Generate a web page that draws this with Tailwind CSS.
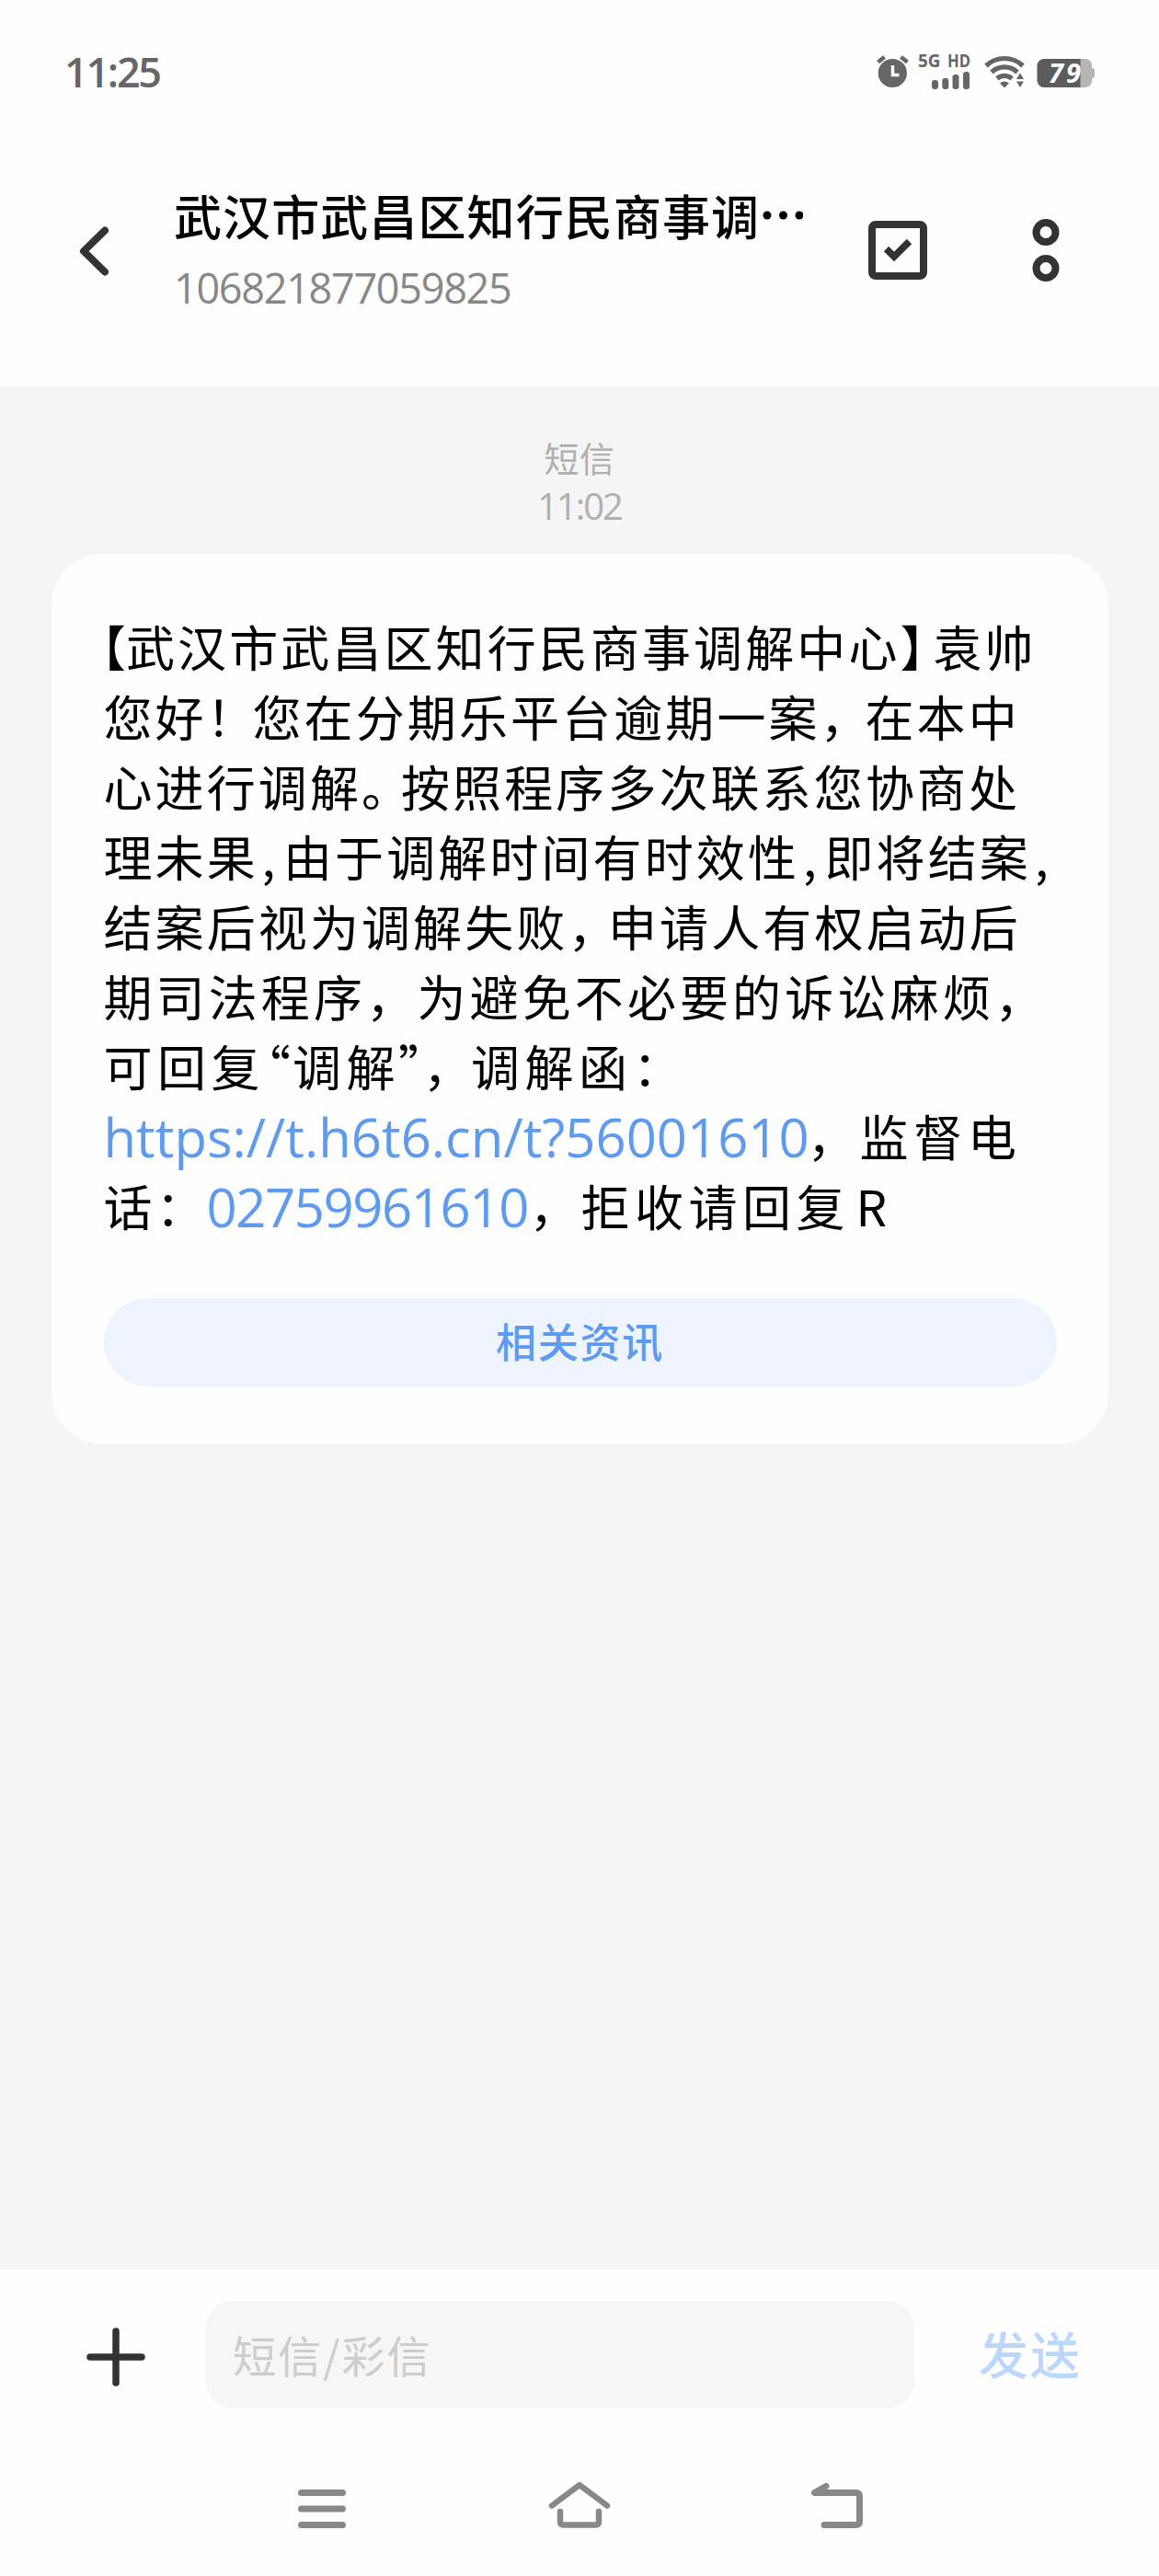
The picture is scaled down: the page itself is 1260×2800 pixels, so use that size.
<!DOCTYPE html>
<html lang="zh-CN">
<head>
<meta charset="utf-8">
<title>短信</title>
<script src="https://cdn.jsdelivr.net/npm/@tailwindcss/browser@4"></script>
</head>
<body class="w-[1260px] h-[2800px] bg-[#fefefe] flex flex-col overflow-hidden font-['Noto_Sans_CJK_SC',sans-serif] text-black">

<!-- status bar -->
<div class="h-[156px] shrink-0 flex items-center justify-between pl-[70px] pr-[68px]">
  <div class="font-['Open_Sans','Noto_Sans',sans-serif] font-semibold text-[45px] leading-[60px] tracking-[-2.300px] text-[#666]">11:25</div>
  <svg class="w-[240px] h-[60px]" viewBox="952 48 240 60" fill="#666">
    <circle cx="970.3" cy="79.5" r="15.6"/>
    <path d="M954.5 67.5l7-5.5M986.500 67.500l-7-5.500" stroke="#666" stroke-width="4.500"/>
    <path d="M970.500 71v10.500h7" fill="none" stroke="#fff" stroke-width="3.500"/>
    <text x="998" y="72.500" font-family="Open Sans" font-weight="700" font-size="19.500" textLength="24.500" lengthAdjust="spacingAndGlyphs">5G</text>
    <text x="1030" y="73" font-family="Open Sans" font-weight="700" font-size="20" textLength="25" lengthAdjust="spacingAndGlyphs">HD</text>
    <rect x="1013" y="87" width="7" height="10" rx="3"/>
    <rect x="1024.300" y="85" width="7" height="12" rx="3"/>
    <rect x="1035.500" y="81" width="7" height="16" rx="3"/>
    <rect x="1047" y="78" width="7" height="19" rx="3"/>
    <g fill="none" stroke="#666" stroke-width="5.200">
      <path d="M1072 71.500a29 29 0 0 1 40 0"/>
      <path d="M1078 78.500a20.500 20.500 0 0 1 28 0"/>
      <path d="M1084 85.500a12 12 0 0 1 16 0"/>
    </g>
    <path d="M1087 90.500q5-4 10 0l-5 5zM1105 86l4-6.500 4 6.500zM1105 88.500h8l-4 6.500z"/>
    <path d="M1170 64h10a7 7 0 0 1 7 7v3q3 0 3 3v5q0 3-3 3v3a7 7 0 0 1-7 7h-10z" fill="#b5b5b5"/>
    <path d="M1135 64h39.500v31H1135a7.500 7.500 0 0 1-7.500-7.500v-16a7.500 7.500 0 0 1 7.500-7.500z" fill="#5c5c5c"/>
    <text x="1140" y="90" font-family="Open Sans" font-weight="700" font-style="italic" font-size="29" fill="#fff" textLength="35">79</text>
  </svg>
</div>

<!-- conversation header -->
<div class="h-[264px] shrink-0 flex items-start pl-[82px] pt-[48px]">
  <svg class="w-[40px] h-[64px] mt-[37px]" viewBox="82 241 40 64" fill="none" stroke="#333" stroke-width="8" stroke-linecap="round" stroke-linejoin="round"><path d="M114 250.500L91 273l23 22.500"/></svg>
  <div class="ml-[67px] w-[755px]">
    <div class="flex items-center h-[60px] text-[52px] leading-[60px] font-medium tracking-[1.100px] whitespace-nowrap">武汉市武昌区知行民商事调<svg class="w-[44px] h-[10px] ml-[3px]" viewBox="0 0 44 10"><circle cx="5" cy="5" r="4.500"/><circle cx="22.500" cy="5" r="4.500"/><circle cx="40" cy="5" r="4.500"/></svg></div>
    <div class="mt-[19px] h-[60px] font-['Open_Sans','Noto_Sans',sans-serif] text-[45px] leading-[60px] tracking-[-1.300px] text-[#888]">106821877059825</div>
  </div>
  <svg class="w-[64px] h-[64px] mt-[36px]" viewBox="0 0 64 64" fill="none" stroke="#333" stroke-width="8"><rect x="4" y="4" width="56" height="56" rx="4"/><path d="M19.500 30.500l8.500 8.500L44.500 22.500" stroke-width="7.500" stroke-linejoin="miter"/></svg>
  <svg class="w-[30px] h-[68px] mt-[34px] ml-[114px]" viewBox="0 0 30 68" fill="none" stroke="#333" stroke-width="8"><circle cx="15" cy="14.500" r="10.500"/><circle cx="15" cy="53.500" r="10.500"/></svg>
</div>

<!-- message thread -->
<div class="h-[2047px] shrink-0 bg-[#f5f5f5] flex flex-col items-center pt-[52px]">
  <div class="text-[38px] leading-[50px] text-[#b0b0b0] tracking-[0.500px]">短信</div>
  <div class="mt-[2px] font-['Open_Sans','Noto_Sans',sans-serif] text-[40px] leading-[52px] tracking-[-2px] text-[#b0b0b0]">11:02</div>

  <div class="mt-[26px] w-[1149px] h-[968px] rounded-[56px] bg-[#fefefe] pl-[57px] pt-[62px]">
    <div class="text-[53px] leading-[76px] whitespace-nowrap">
      <div class="flex h-[76px] tracking-[3.100px]"><span class="w-[24.500px] flex justify-end tracking-normal [font-feature-settings:'halt']">【</span><span class="w-[841.500px]">武汉市武昌区知行民商事调解中心</span><span class="w-[36px] tracking-normal [font-feature-settings:'halt']">】</span><span>袁帅</span></div>
      <div class="flex h-[76px] tracking-[3.100px]"><span class="w-[112px]">您好</span><span class="w-[50px] tracking-[-3px]">！</span><span class="w-[617px]">您在分期乐平台逾期一案</span><span class="w-[49px] [font-feature-settings:'halt']">，</span><span>在本中</span></div>
      <div class="flex h-[76px] tracking-[3.100px]"><span class="w-[280.500px]">心进行调解</span><span class="w-[43px] [font-feature-settings:'halt']">。</span><span>按照程序多次联系您协商处</span></div>
      <div class="flex h-[76px] tracking-[3.100px]"><span class="w-[168px]">理未果</span><span class="w-[27.500px] pl-[4px]">,</span><span class="w-[561px]">由于调解时间有时效性</span><span class="w-[27.500px] pl-[4px]">,</span><span class="w-[224.500px]">即将结案</span><span class="pl-[4px]">,</span></div>
      <div class="flex h-[76px] tracking-[3.100px]"><span class="w-[505px]">结案后视为调解失败</span><span class="w-[43.500px] [font-feature-settings:'halt']">，</span><span>申请人有权启动后</span></div>
      <div class="flex h-[76px] tracking-[4.100px]"><span class="w-[285.500px]">期司法程序</span><span class="w-[55.500px] [font-feature-settings:'halt']">，</span><span class="w-[628px]">为避免不必要的诉讼麻烦</span><span class="[font-feature-settings:'halt']">，</span></div>
      <div class="flex h-[76px] tracking-[5.500px]"><span class="w-[176px]">可回复</span><span class="w-[29.500px] flex justify-end pr-[2px] tracking-normal [font-feature-settings:'halt']">“</span><span class="w-[115px]">调解</span><span class="w-[27px] tracking-normal [font-feature-settings:'halt']">”</span><span class="w-[52px] [font-feature-settings:'halt']">，</span><span class="w-[176px]">调解函</span><span>：</span></div>
      <div class="flex h-[76px] tracking-[5.800px]"><a class="w-[765px] pt-[2px] font-['Open_Sans','Noto_Sans',sans-serif] text-[58px] tracking-normal text-[#5e9bf0]">https://t.h6t6.cn/t?56001610</a><span class="w-[57px] [font-feature-settings:'halt']">，</span><span>监督电</span></div>
      <div class="flex h-[76px] tracking-[5.500px]"><span class="w-[57px]">话</span><span class="w-[55px] tracking-[-2px]">：</span><a class="w-[351px] pt-[2px] font-['Open_Sans','Noto_Sans',sans-serif] text-[58px] tracking-[-1.400px] text-[#5e9bf0]">02759961610</a><span class="w-[56px] [font-feature-settings:'halt']">，</span><span class="w-[299px]">拒收请回复</span><span>R</span></div>
    </div>
    <div class="mt-[63px] w-[1036px] h-[96px] rounded-full bg-[#edf4fe] flex items-center justify-center pb-[4px] text-[44px] leading-[60px] font-medium tracking-[1.800px] text-[#5e9bf0]">相关资讯</div>
  </div>
</div>

<!-- composer -->
<div class="h-[190px] shrink-0 flex items-start pl-[94px] pt-[34px]">
  <svg class="w-[64px] h-[64px] mt-[29px]" viewBox="0 0 64 64" stroke="#333" stroke-width="7.500" stroke-linecap="round"><path d="M4 32h56M32 4v56"/></svg>
  <div class="ml-[66px] w-[770px] h-[117px] rounded-[30px] bg-[#f6f6f6] flex items-center pl-[29px] pb-[2px] text-[47px] leading-[60px] tracking-[2px] text-[#cdcdcd]">短信/彩信</div>
  <div class="ml-[70px] mt-[21px] text-[54px] leading-[72px] font-medium tracking-[2px] text-[#bcd7fb]">发送</div>
</div>

<!-- system navigation -->
<div class="h-[143px] shrink-0 flex items-start pt-[33px] pl-[320px]">
  <svg class="w-[60px] h-[72px]" viewBox="320 2690 60 72" fill="none" stroke="#888" stroke-width="7" stroke-linecap="round"><path d="M327.500 2709.500h45M327.500 2727h45M327.500 2744.500h45"/></svg>
  <svg class="w-[80px] h-[72px] ml-[210px]" viewBox="590 2690 80 72" fill="none" stroke="#888" stroke-width="6.500" stroke-linecap="round" stroke-linejoin="round"><path d="M600 2723.500L630 2701l30 22.500M609 2730v11q0 3.500 3.500 3.500h35q3.500 0 3.500-3.500v-11"/></svg>
  <svg class="w-[70px] h-[72px] ml-[205px]" viewBox="875 2690 70 72" fill="none" stroke="#888" stroke-width="7" stroke-linecap="round" stroke-linejoin="round"><path d="M898 2702.500l-12.500 7h45q4 0 4 4v27q0 4-4 4H896"/></svg>
</div>
</body>
</html>
